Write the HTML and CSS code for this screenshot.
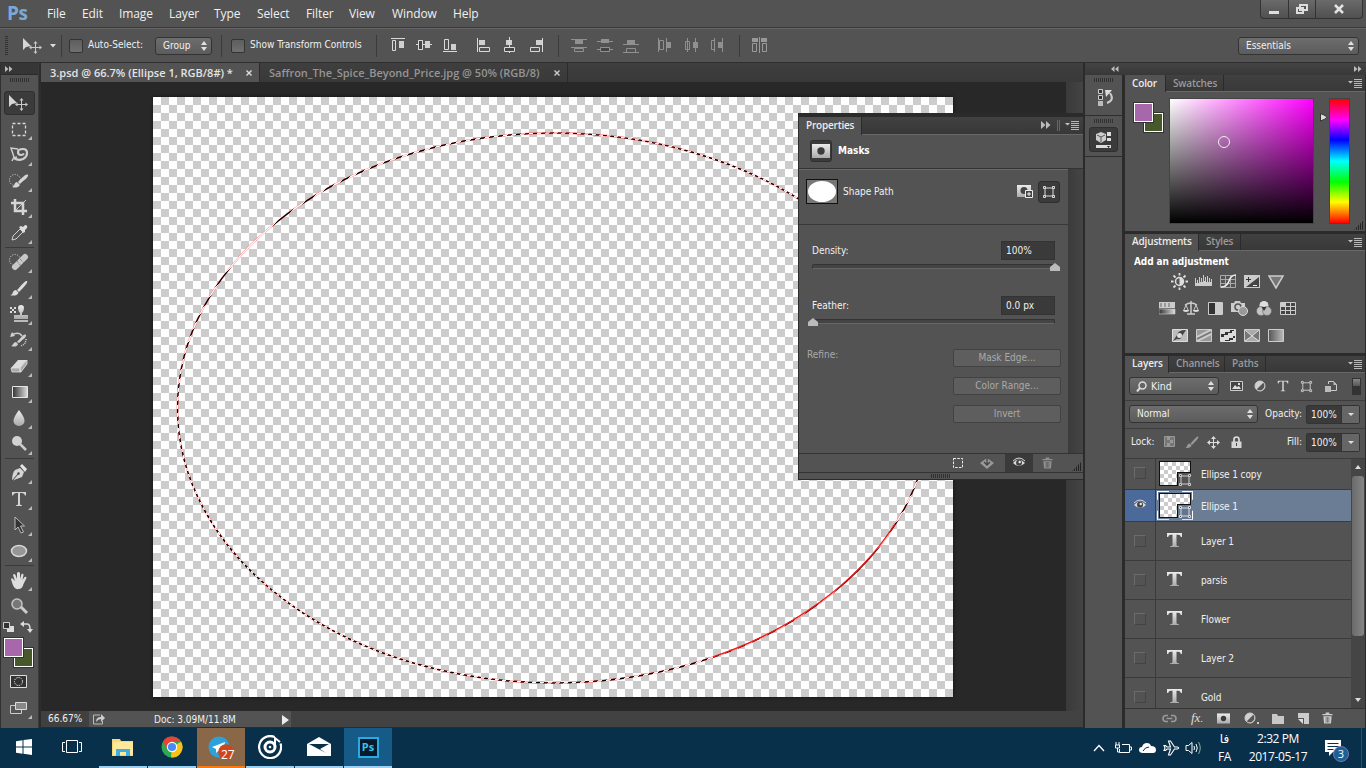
FILE: index.html
```html
<!DOCTYPE html>
<html lang="en">
<head>
<meta charset="utf-8">
<title>3.psd</title>
<link rel="stylesheet" href="styles.css">
</head>
<body>
<svg class="defs" width="0" height="0">
  <defs>
    <linearGradient id="metal" x1="0" y1="0" x2="0" y2="1"><stop offset="0" stop-color="#ececec"/><stop offset="1" stop-color="#aaa"/></linearGradient>
    <linearGradient id="fade"><stop offset="0" stop-color="#333"/><stop offset="1" stop-color="#ddd"/></linearGradient>
    <linearGradient id="fade2"><stop offset="0" stop-color="#555"/><stop offset="1" stop-color="#bbb"/></linearGradient>
    <symbol id="move" viewBox="0 0 22 18"><path d="M1 1v12l3-3 5-1z" fill="#d6d6d6"/><path d="M13.500 6v9M9 10.500h9" stroke="#c9c9c9"/><path d="M13.500 4l2 2.500h-4zM13.500 17l2-2.500h-4zM7 10.500l2.500-2v4zM20 10.500l-2.500-2v4z" fill="#c9c9c9"/></symbol>
    <symbol id="typ" viewBox="0 0 16 16"><path d="M0 1h15v4h-1.200Q13.500 2.800 11 2.800H9.500V13q0 1.300 2.500 1.300V15H3v-.7q2.500 0 2.500-1.300V2.800H4Q1.500 2.800 1.200 5H0z" fill="url(#metal)"/></symbol>
    <symbol id="typthin" viewBox="0 0 16 16"><path d="M1 1h14v3.500h-1Q13.500 2 11 2H9v11q0 1.300 2 1.300V15H5v-.7q2 0 2-1.300V2H5Q2.500 2 2 4.500H1z" fill="#d4d4d4"/></symbol>
    <symbol id="shape" viewBox="0 0 14 14"><path d="M3 3h8v8H3z" fill="none" stroke="currentColor"/><path d="M1.500 1.500h2v2h-2zM10.500 1.500h2v2h-2zM1.500 10.500h2v2h-2zM10.500 10.500h2v2h-2z" fill="#444" stroke="currentColor"/></symbol>
    <symbol id="eye" viewBox="0 0 14 12"><path d="M1 6Q7-1 13 6 7 12 1 6z" fill="#d8d8d8"/><circle cx="7" cy="5.700" r="3" fill="#444"/><circle cx="7.700" cy="5" r="1.200" fill="#eee"/><path d="M1 4Q7-2 13 4" fill="none" stroke="#d8d8d8"/></symbol>
    <symbol id="trash" viewBox="0 0 12 12"><path d="M4 0h4v1.500h3.500V3H.500V1.500H4zM1.500 4h9l-.7 8H2.200z" fill="currentColor"/><path d="M4.500 5v6M6 5v6M7.500 5v6" stroke="#505050" stroke-width=".7"/></symbol>
    <symbol id="menu" viewBox="0 0 14 9"><path d="M0 2h5L2.500 4.500z" fill="#c4c4c4"/><path d="M6 .5h8M6 2.500h8M6 4.500h8M6 6.500h8M6 8.500h8" stroke="#b8b8b8"/></symbol>
    <symbol id="updown" viewBox="0 0 6 10"><path d="M0 4l3-4 3 4zM0 6l3 4 3-4z" fill="#e0e0e0"/></symbol>
    <symbol id="mask" viewBox="0 0 18 14"><path d="M0 0h18v14H0z" fill="url(#metal)"/><circle cx="9" cy="7" r="3.700" fill="#3b3b3b"/></symbol>
    <symbol id="brush" viewBox="0 0 20 18"><path d="M18 2c2 1-5 8-8 11l-2-2c3-3 8-10 10-9zM7 11l2.500 2.500C8.500 17 4 17 1 16c2 0 2.500-1 3-3q1-2 3-2z" fill="currentColor"/></symbol>
    <symbol id="adj" viewBox="0 0 12 12"><circle cx="6" cy="6" r="5" fill="#d0d0d0"/><path d="M9.500 2.500a5 5 0 0 1-7 7z" fill="#555"/><circle cx="6" cy="6" r="5" fill="none" stroke="#ccc"/></symbol>
  </defs>
</svg>

<header class="menubar">
  <span class="logo">Ps</span>
  <nav class="menus"><span>File</span><span>Edit</span><span>Image</span><span>Layer</span><span>Type</span><span>Select</span><span>Filter</span><span>View</span><span>Window</span><span>Help</span></nav>
  <div class="winbtns">
    <svg width="101" height="18"><path d="M27.500 0v18M54.500 0v18" stroke="#333"/><path d="M8 11h10v3H8z" fill="#ddd"/><path d="M39 5h7v5h-7zM36 8h6v5h-6z" fill="#555" stroke="#ddd" stroke-width="2"/><path d="M74 5l8 8M82 5l-8 8" stroke="#e2e2e2" stroke-width="2.500"/></svg>
  </div>
</header>

<section class="options">
  <i class="grip-v"></i>
  <svg class="opt-move" width="22" height="18"><use href="#move"/></svg>
  <svg class="opt-arrow" width="6" height="4"><path d="M0 0h6L3 3.500z" fill="#ddd"/></svg>
  <i class="sep"></i>
  <i class="check c1"></i><span class="t auto">Auto-Select:</span>
  <div class="select group"><span>Group</span><svg width="6" height="10"><use href="#updown"/></svg></div>
  <i class="sep s2"></i>
  <i class="check c2"></i><span class="t show">Show Transform Controls</span>
  <i class="sep s3"></i>
  <svg class="align" width="166" height="18" fill="none" stroke="#d9d9d9">
    <path d="M1 2.500h14M2.500 4.500h3v10h-3zM26 8.500h16M28.500 4.500h4v9h-4zM53 15.500h14M54.500 3.500h4v10h-4z"/><path d="M9 5h5v7H9zM35 5h5v7h-5zM61 8h5v6h-5zM89 4h6v5h-6zM116 4h6v5h-6zM146 4h7v5h-7z" fill="#cfcfcf" stroke="none"/><path d="M28.500 4.500h4v9h-4z" fill="#444"/><path d="M87.500 2v14M89.500 11.500h10v4h-10zM119.500 1v16M152.500 2v14M140.500 11.500h9v4h-9z"/><path d="M114.500 11.500h10v4h-10z" fill="#444"/></svg>
  <i class="sep s4"></i>
  <svg class="distribute" width="154" height="18" fill="none" stroke="#909090">
    <path d="M0 3.500h16M0 11.500h16M3.500 12.500h9v3h-9zM26 5.500h16M26 13.500h16M52 8.500h16M52 16.500h16M55.500 12.500h9v4h-9z"/><path d="M29.500 11.500h9v4h-9z" fill="#444"/><path d="M4 4h8v4H4zM30 3h8v4h-8zM56 4h8v4h-8z" fill="#909090" stroke="none"/><path d="M87.500 2v14M95.500 2v14M88.500 4.500h4v9h-4zM116.500 2v14M124.500 2v14M114.500 5.500h4v8h-4zM143.500 2v14M151.500 2v14M140.500 4.500h3v9h-3z"/><path d="M96 6h4v6h-4zM122 6h5v6h-5zM147 6h4v6h-4z" fill="#909090" stroke="none"/></svg>
  <i class="sep s5"></i>
  <svg class="autoalign" width="16" height="18"><path d="M0 2h6v4H0zM9 2h6v4H9z" fill="#999"/><path d="M.5 7.500h4v8h-4zM10.500 7.500h4v8h-4zM7.500 1v16" fill="none" stroke="#999"/></svg>
  <div class="select essentials"><span>Essentials</span><svg width="6" height="10"><use href="#updown"/></svg></div>
</section>

<main class="work">
  <aside class="tools">
    <div class="toolhead"><svg width="8" height="6"><path d="M0 0l3.500 3L0 6zM4 0l3.500 3L4 6z" fill="#bbb"/></svg></div>
    <i class="grip-h"></i>
    <div class="tool on"><svg width="22" height="18"><use href="#move"/></svg></div>
    <div class="tool sub"><svg width="22" height="20"><path d="M4.500 4.500h13v12h-13z" fill="none" stroke="#d8d8d8" stroke-width="1.300" stroke-dasharray="3 2"/></svg></div>
    <div class="tool sub"><svg width="22" height="20" fill="none" stroke="#d0d0d0"><path d="M10 4L3 3l3 9M6 12l-2 4M5 13l4-1" stroke-width="1.400"/><path d="M6 13q4 3 9 1 4-2 4-6 0-4-4-4-5 0-5 3 0 3 3 3 2 0 3-1.500" stroke-width="2.200"/></svg></div>
    <div class="tool sub"><svg width="22" height="20"><circle cx="7" cy="9" r="5.500" fill="none" stroke="#ddd" stroke-dasharray="1 1.500"/><path d="M20 4c1 2-5 6-8 9l-2-2c3-3 8-9 10-7zM9 11l3 3c-2 3-5 3-8 2 3-1 2-5 5-5z" fill="#d5d5d5"/></svg></div>
    <div class="tool sub"><svg width="22" height="20"><path d="M7 2v12h12M3 6h12v12" fill="none" stroke="#d5d5d5" stroke-width="2.500"/><path d="M7 14L18 3" stroke="#ccc"/></svg></div>
    <div class="tool sub"><svg width="22" height="20"><path d="M4 17l1-4 7-7 3 3-7 7z" fill="#555" stroke="#d0d0d0"/><path d="M11 4l2-1 2 1 2-2q3 0 2 3l-2 2v2l-2 1z" fill="#ddd"/></svg></div>
    <i class="toolsep"></i>
    <div class="tool sub"><svg width="22" height="20"><circle cx="7" cy="8" r="5.500" fill="none" stroke="#ddd" stroke-dasharray="1 1.500"/><path d="M7 15L17 5" stroke="#c8c8c8" stroke-width="6" stroke-linecap="round"/><path d="M9 9l4 5M12 7l4 4" stroke="#666" stroke-dasharray="1 1"/></svg></div>
    <div class="tool sub"><svg width="20" height="18" color="#ddd"><use href="#brush"/></svg></div>
    <div class="tool sub"><svg width="22" height="20"><path d="M10 4a3 3 0 0 1 6 0q0 3-2 5v2h6v4H6v-4h6V9q-2-2-2-5z" fill="url(#metal)"/><path d="M6 17h14" stroke="#ddd" stroke-width="1.500"/><path d="M2 3h2v2H2zM6 3h2v2H6zM4 5h2v2H4zM2 7h2v2H2zM6 7h2v2H6z" fill="#ddd"/></svg></div>
    <div class="tool sub"><svg width="22" height="20"><path d="M3 5q8-4 11 1" fill="none" stroke="#ccc" stroke-width="1.500"/><path d="M2 7l5-1-3-4zM18 5c1 2-5 6-7 8l-2-1c3-3 7-9 9-7zM8 12l2 2c-1 3-4 3-7 2 2 0 2-4 5-4z" fill="#d0d0d0"/><path d="M18 9q0 6-6 7" fill="none" stroke="#ccc" stroke-width="1.500" stroke-dasharray="1 1"/></svg></div>
    <div class="tool sub"><svg width="22" height="20"><path d="M3 12l7-8h9l-7 8z" fill="#ddd"/><path d="M3 12h9v4H4zM12 12l7-8v4l-6 8h-1z" fill="#aaa" stroke="#e0e0e0" stroke-width=".8"/></svg></div>
    <div class="tool sub"><svg width="22" height="20"><path d="M4.500 4.500h15v11h-15z" fill="url(#fade)" stroke="#e5e5e5"/></svg></div>
    <div class="tool sub"><svg width="22" height="20"><path d="M11 2q6 8 5.500 11a5.500 5 0 0 1-11 0Q5.500 9 11 2z" fill="url(#metal)"/></svg></div>
    <div class="tool sub"><svg width="22" height="20"><circle cx="9" cy="7" r="5" fill="#d2d2d2"/><path d="M12 10l6 6" stroke="#ccc" stroke-width="2.500"/></svg></div>
    <i class="toolsep"></i>
    <div class="tool sub"><svg width="22" height="20"><path d="M4 18Q4 10 7 7l5-2 4 4-2 5-8 3z" fill="#d5d5d5"/><path d="M12 3l2-2 5 5-2 3z" fill="#e5e5e5"/><path d="M4 18l6-7" stroke="#444"/><circle cx="10.500" cy="10.500" r="1.200" fill="#444"/></svg></div>
    <div class="tool sub"><svg width="16" height="16"><use href="#typthin"/></svg></div>
    <div class="tool sub"><svg width="22" height="20"><path d="M7 2v13l3-3 3 6 2.500-1-3-6h4z" fill="#333" stroke="#bbb"/></svg></div>
    <div class="tool sub"><svg width="22" height="20"><ellipse cx="11" cy="10" rx="7.500" ry="5.500" fill="#969696" stroke="#d8d8d8" stroke-width="1.500"/></svg></div>
    <i class="toolsep"></i>
    <div class="tool sub"><svg width="22" height="20"><path d="M3 9q1-2 3 1l1 1-2-6q1-2 2.500 0L9 9V3q1.500-2 3 0v6l1.500-5q2-1 2 1l-1 5 2-3q2-1 2 1l-3 6q-1 5-5 5-4 1-6-5z" fill="#ddd"/></svg></div>
    <div class="tool"><svg width="22" height="20"><circle cx="9" cy="8" r="5" fill="#777" stroke="#c5c5c5" stroke-width="1.500"/><path d="M13 11l6 6" stroke="#ccc" stroke-width="3"/></svg></div>
    <svg class="minis" width="34" height="12"><path d="M6 5h7v6H6z" fill="#ddd"/><path d="M2.500 1.500h6v6h-6z" fill="#333" stroke="#ccc"/><path d="M21 3h5q3 0 3 5" fill="none" stroke="#ddd" stroke-width="1.500"/><path d="M19 3l4-3v6zM26 8h6l-3 4z" fill="#ddd"/></svg>
    <div class="swatches"><i class="bg"></i><i class="fg"></i></div>
    <div class="tool qm"><svg width="18" height="14"><path d="M.5.500h16v12H.500z" fill="#333" stroke="#ddd"/><circle cx="8.500" cy="6.500" r="4" fill="none" stroke="#eee" stroke-dasharray="1.300 1"/></svg></div>
    <div class="tool sub"><svg width="20" height="18"><path d="M1.500 6.500h11v8h-11z" fill="#555" stroke="#ccc"/><path d="M6.500 3.500h11v7h-11z" fill="#888" stroke="#ddd"/></svg></div>
  </aside>

  <section class="document">
    <div class="tabs">
      <div class="tab active"><span class="name1">3.psd @ 66.7% (Ellipse 1, RGB/8#) *</span><svg width="6" height="6"><path d="M.5.5l5 5M5.500.5l-5 5" stroke="#ddd" stroke-width="1.400"/></svg></div>
      <div class="tab"><span class="name2">Saffron_The_Spice_Beyond_Price.jpg @ 50% (RGB/8)</span><svg width="6" height="6"><path d="M.5.5l5 5M5.500.5l-5 5" stroke="#ccc" stroke-width="1.400"/></svg></div>
    </div>
    <div class="stage">
      <div class="artboard">
        <svg width="800" height="600">
          <defs><linearGradient id="ants" gradientUnits="userSpaceOnUse" x1="0" y1="0" x2="4" y2="4" spreadMethod="repeat"><stop offset="0" stop-color="#000"/><stop offset=".5" stop-color="#000"/><stop offset=".5" stop-color="#fff"/><stop offset="1" stop-color="#fff"/></linearGradient></defs>
          <ellipse cx="401" cy="311" rx="376.500" ry="275" fill="none" stroke="#f22" stroke-opacity=".65" stroke-width="1.800"/>
          <ellipse cx="401" cy="311" rx="376.500" ry="275" fill="none" stroke="url(#ants)" stroke-width="1.200"/>
          <path d="M742 427A376.500 275 0 0 1 560 560" fill="none" stroke="#f11818" stroke-width="1.300"/>
        </svg>
      </div>
      <i class="vscroll"></i>
    </div>
    <div class="status"><span class="zoom">66.67%</span><div class="doc"><svg width="14" height="12"><path d="M8 2H1.500v9h9V8" fill="none" stroke="#bbb"/><path d="M4 9q0-5 5-5V1l4 4-4 4V6Q6 6 4 9z" fill="#ccc"/></svg><span>Doc: 3.09M/11.8M</span><svg class="play" width="7" height="10"><path d="M0 0l7 5-7 5z" fill="#eee"/></svg></div></div>
  </section>

  <section class="dock">
    <div class="dockhead"><svg width="8" height="6"><path d="M3.500 0L0 3l3.500 3zM7.500 0L4 3l3.500 3z" fill="#bbb"/></svg><svg width="8" height="6"><path d="M0 0l3.500 3L0 6zM4 0l3.500 3L4 6z" fill="#bbb"/></svg></div>
    <div class="dockbody">
      <div class="icons">
        <div class="iconcell"><i class="grip-h"></i><svg width="24" height="22"><path d="M6.500 2.500h4v4h-4zM6.500 8.500h4v4h-4z" fill="#333" stroke="#ccc"/><path d="M6 14h5v5H6z" fill="#bbb"/><path d="M15 16q8-3 3-10" fill="none" stroke="#ccc" stroke-width="2"/><path d="M13 3h7l-6 7z" fill="#ddd"/></svg></div>
        <div class="iconcell"><i class="grip-h"></i><div class="pressed"><svg width="18" height="18"><path d="M6 1l5 2v6l-5 3-5-3V3z" fill="#ccc"/><path d="M2 4l4 2v5M6 6l4-2" fill="none" stroke="#555"/><path d="M12 1h4v4h-4zM12 7h4v3h-4zM1 14h15v3H1z" fill="#ddd"/><path d="M12 15h3l-1.500 2z" fill="#222"/></svg></div></div>
      </div>
      <div class="panels">
        <section class="panel color">
          <div class="ptabs"><b class="sel w38">Color</b><b class="w58">Swatches</b><svg width="14" height="9"><use href="#menu"/></svg></div>
          <div class="colorbody">
            <div class="swatches"><i class="bg"></i><i class="fg"></i></div>
            <div class="field"><i class="ring"></i></div>
            <svg class="hueptr" width="7" height="9"><path d="M.5.500Q7 3 6.500 4.500 6 6 .5 8z" fill="#ddd" stroke="#333"/></svg>
            <div class="hue"></div>
          </div>
          <i class="resize"></i>
        </section>
        <section class="panel adjust">
          <div class="ptabs"><b class="sel w73">Adjustments</b><b class="w42">Styles</b><svg width="14" height="9"><use href="#menu"/></svg></div>
          <div class="adjtitle">Add an adjustment</div>
          <div class="adjrow r1">
            <svg width="17" height="17"><circle cx="8.500" cy="8.500" r="4" fill="#555" stroke="#ddd" stroke-width="1.500"/><path d="M8.500 4.500a4 4 0 0 1 0 8z" fill="#ddd"/><path d="M8.500 0v2.500M8.500 14.500V17M0 8.500h2.500M14.500 8.500H17M2.500 2.500l2 2M12.500 12.500l2 2M2.500 14.500l2-2M12.500 4.500l2-2" stroke="#ddd" stroke-width="1.800"/></svg>
            <svg width="18" height="17"><path d="M0 13V5h1v5h1V7h1v3h1V4h1v5h1V5h1v4h1V2h1v6h1V4h1v5h1V3h1v6h1V5h1v4h1V6h1v7z" fill="#ccc"/></svg>
            <svg width="17" height="17"><path d="M.5 2.500h15v12H.5zM5.500 2v12M10.500 2v12M0 6.500h16M0 10.500h16" fill="none" stroke="#aaa"/><path d="M1 14q6 0 8-6t7-6" fill="none" stroke="#eee" stroke-width="1.500"/></svg>
            <svg width="17" height="17"><path d="M0 2h16v13H0z" fill="#ccc"/><path d="M2 14L15 4v10z" fill="#444"/><path d="M2 6.500h5M4.500 4v5" stroke="#333"/><path d="M9 12.500h4" stroke="#eee"/></svg>
            <svg width="17" height="17"><path d="M1 3h14L8 15z" fill="#777" stroke="#ccc" stroke-width="1.500"/></svg>
          </div>
          <div class="adjrow r2">
            <svg width="17" height="17"><path d="M0 2h16v6H0z" fill="#ccc"/><path d="M2 3v4M6 3v4M10 3v4" stroke="#888" stroke-width="1.500"/><path d="M0 9h16v5H0z" fill="url(#fade)" stroke="#ccc" stroke-width=".6"/></svg>
            <svg width="17" height="17"><path d="M8 1v13M4 14h8M2 5q6-4 12 0" fill="none" stroke="#ccc" stroke-width="1.500"/><path d="M3 5l-2.500 6h5zM13 5l-2.500 6h5z" fill="none" stroke="#ccc"/><path d="M0 10h6q-3 4-6 0zM10 10h6q-3 4-6 0z" fill="#ddd"/></svg>
            <svg width="17" height="17"><path d="M1.500 2.500h14v12h-14z" fill="#333" stroke="#ccc"/><path d="M8 3h7v11H8z" fill="#ccc"/></svg>
            <svg width="18" height="17"><path d="M0 3h3l1-2h5l1 2h4v9H0z" fill="#ccc"/><circle cx="7" cy="7" r="3" fill="none" stroke="#555" stroke-width="1.500"/><circle cx="12" cy="11" r="4.500" fill="#999" stroke="#ddd"/></svg>
            <svg width="17" height="17"><circle cx="8" cy="5.500" r="4.500" fill="#ddd"/><circle cx="5" cy="11" r="4.500" fill="#c5c5c5" stroke="#666" stroke-width=".6"/><circle cx="11" cy="11" r="4.500" fill="#bbb" stroke="#666" stroke-width=".6"/><path d="M5.500 7h5L8 11z" fill="#333"/></svg>
            <svg width="17" height="17"><path d="M.5 2.500h15v12H.5z" fill="#444" stroke="#ccc"/><path d="M1 3h4v4H1z" fill="#ccc"/><path d="M5.500 2v12M10.500 2v12M0 6.500h16M0 10.500h16" stroke="#ccc"/></svg>
          </div>
          <div class="adjrow r3">
            <svg width="17" height="17"><path d="M.5 2.500h15v12H.5z" fill="#bbb" stroke="#ddd"/><path d="M1 14l4-6q1-5 9-5L10 9q-1 4-5 3z" fill="#444"/><circle cx="7.500" cy="8.500" r="2.500" fill="#ddd"/></svg>
            <svg width="17" height="17"><path d="M.5 2.500h15v12H.5z" fill="#999" stroke="#ccc"/><path d="M1 10L15 3M1 14L15 7" stroke="#ccc" stroke-width="2"/><path d="M1 12L15 5" stroke="#777" stroke-width="1.500"/></svg>
            <svg width="17" height="17"><path d="M.5 2.500h15v12H.5z" fill="#ddd" stroke="#ddd"/><path d="M1 7h4V5h5V3h4v1h-2v2H8v2H4v2H1zM15 7v2h-2v2H9v2H5v1h5v-1h3v-2h2z" fill="#333"/></svg>
            <svg width="17" height="17"><path d="M.5 2.500h15v12H.5z" fill="#777" stroke="#ccc"/><path d="M1 3l7 6 7-6M1 14l7-5 7 5" fill="#aaa" stroke="#ddd"/></svg>
            <svg width="17" height="17"><path d="M.5 2.500h15v12H.5z" fill="url(#fade2)" stroke="#ccc"/></svg>
          </div>
        </section>
        <section class="panel layers">
          <div class="ptabs"><b class="sel w43">Layers</b><b class="w56">Channels</b><b class="w41">Paths</b><svg width="14" height="9"><use href="#menu"/></svg></div>
          <div class="lrow filter">
            <div class="select kind"><svg class="mag" width="11" height="11"><circle cx="6.500" cy="4.500" r="3.500" fill="none" stroke="#ddd" stroke-width="1.500"/><path d="M4 7l-3 3.500" stroke="#ddd" stroke-width="2"/></svg><span>Kind</span><svg width="6" height="10"><use href="#updown"/></svg></div>
            <svg width="13" height="12"><path d="M.5 1.500h12v9H.5z" fill="#444" stroke="#ccc"/><path d="M2 9l3-4 2 2 2-1 2 3z" fill="#ddd"/><path d="M8 3h2v2H8z" fill="#ddd"/></svg>
            <svg width="12" height="12"><use href="#adj"/></svg>
            <svg width="12" height="12"><use href="#typthin"/></svg>
            <svg width="13" height="13" color="#ccc"><use href="#shape"/></svg>
            <svg width="13" height="13"><path d="M4.500 4V1.500h5l3 3v6H7" fill="none" stroke="#ccc"/><path d="M9.500 1v4H13M1 6h6v6H1z" fill="#bbb"/></svg>
            <i class="switch"></i>
          </div>
          <div class="lrow blend"><div class="select normal"><span>Normal</span><svg width="6" height="10"><use href="#updown"/></svg></div><span class="rlabel">Opacity:</span><div class="num"><span>100%</span><i></i></div></div>
          <div class="lrow lock"><span>Lock:</span>
            <svg width="12" height="12"><path d="M.5.500h10v10H.500z" fill="#777" stroke="#999"/><path d="M3 1h3v3H3zM6 4h3v3H6zM3 7h3v3H3z" fill="#999"/></svg>
            <svg width="16" height="14" color="#999"><use href="#brush"/></svg>
            <svg width="13" height="13"><path d="M6.500 2v9M2 6.500h9" stroke="#ddd"/><path d="M6.500 0L9 3H4zM6.500 13L9 10H4zM0 6.500L3 4v5zM13 6.500L10 4v5z" fill="#ddd"/></svg>
            <svg width="11" height="13"><path d="M3 6V3.500q0-2.500 2.500-2.500T8 3.500V6" fill="none" stroke="#ddd" stroke-width="1.700"/><path d="M.5 5.500h10V12H.500z" fill="#d5d5d5"/><path d="M5 7h1v3H5z" fill="#444"/></svg>
            <span class="rlabel">Fill:</span><div class="num"><span>100%</span><i></i></div></div>
          <div class="list">
            <div class="rows">
              <div class="layer short"><div class="vis"><i class="box"></i></div><div class="thumb"><div class="chk"></div><svg width="14" height="14" color="#ccc"><use href="#shape"/></svg></div><span>Ellipse 1 copy</span></div>
              <div class="layer short selected"><div class="vis"><svg width="14" height="12"><use href="#eye"/></svg></div><div class="thumb framed"><div class="chk"></div><svg width="14" height="14" color="#d8dde8"><use href="#shape"/></svg></div><span>Ellipse 1</span></div>
              <div class="layer"><div class="vis"><i class="box"></i></div><svg class="tt" width="16" height="16"><use href="#typ"/></svg><span>Layer 1</span></div>
              <div class="layer"><div class="vis"><i class="box"></i></div><svg class="tt" width="16" height="16"><use href="#typ"/></svg><span>parsis</span></div>
              <div class="layer"><div class="vis"><i class="box"></i></div><svg class="tt" width="16" height="16"><use href="#typ"/></svg><span>Flower</span></div>
              <div class="layer"><div class="vis"><i class="box"></i></div><svg class="tt" width="16" height="16"><use href="#typ"/></svg><span>Layer 2</span></div>
              <div class="layer"><div class="vis"><i class="box"></i></div><svg class="tt" width="16" height="16"><use href="#typ"/></svg><span>Gold</span></div>
            </div>
            <div class="scroll"><svg width="6" height="4"><path d="M0 4h6L3 0z" fill="#ddd"/></svg><i></i><svg width="6" height="4"><path d="M0 0h6L3 4z" fill="#ddd"/></svg></div>
          </div>
          <div class="lfoot">
            <svg width="15" height="9"><path d="M6 1.500H4a3 3 0 0 0 0 6h2M9 1.500h2a3 3 0 0 1 0 6H9M4.500 4.500h6" fill="none" stroke="#999" stroke-width="1.600"/></svg>
            <span class="fx">fx<small>.</small></span>
            <svg width="13" height="11"><use href="#mask"/></svg>
            <svg width="15" height="12"><use href="#adj" width="12"/><path d="M13 10h2v2h-2z" fill="#ccc"/></svg>
            <svg width="13" height="11"><path d="M0 1h5l1 2h6v8H0z" fill="#c8c8c8"/></svg>
            <svg width="11" height="11"><path d="M0 0h11v11H6V5H0z" fill="#ccc"/><path d="M0 6h5v5z" fill="#ddd"/></svg>
            <svg width="11" height="12" color="#ccc"><use href="#trash"/></svg>
          </div>
        </section>
      </div>
    </div>
  </section>

  <section class="props">
    <div class="ptabs"><b class="sel">Properties</b><svg class="pa" width="10" height="8"><path d="M0 0l4.500 4L0 8zM5 0l4.500 4L5 8z" fill="#bbb"/></svg><i></i><svg width="14" height="9"><use href="#menu"/></svg></div>
    <div class="masks"><div class="pressed"><svg width="18" height="14"><use href="#mask"/></svg></div><b>Masks</b></div>
    <div class="pbody">
      <div class="pmain">
        <div class="shapepath"><div class="pthumb"><i></i></div><span>Shape Path</span>
          <svg class="addmask" width="18" height="15"><path d="M1 1h14v12H1z" fill="url(#metal)"/><circle cx="8" cy="6.500" r="3.500" fill="#444"/><path d="M9.500 6.500h7v7h-7z" fill="#444" stroke="#eee"/><path d="M11 10h4M13 8v4" stroke="#eee"/></svg>
          <div class="pressed"><svg width="14" height="14" color="#ddd"><use href="#shape"/></svg></div></div>
        <div class="prow dens"><span>Density:</span><div class="inp">100%</div></div>
        <div class="slider end"><i></i></div>
        <div class="prow feath"><span>Feather:</span><div class="inp">0.0 px</div></div>
        <div class="slider"><i></i></div>
        <div class="refine"><span>Refine:</span><div class="btns"><div>Mask Edge...</div><div>Color Range...</div><div>Invert</div></div></div>
      </div>
      <div class="pscroll"></div>
    </div>
    <div class="pfoot">
      <svg width="12" height="12"><path d="M1.500 1.500h9v9h-9z" fill="none" stroke="#eee" stroke-dasharray="2.500 1.300"/></svg>
      <svg width="16" height="12"><path d="M8 1l7 5-7 6-7-6z" fill="#999"/><path d="M8 0v7M5 5l3 3 3-3" fill="none" stroke="#444" stroke-width="1.300"/></svg>
      <div class="eyebtn"><svg width="14" height="12"><use href="#eye"/></svg></div>
      <svg width="11" height="12" color="#909090"><use href="#trash"/></svg>
      <i class="resize"></i>
    </div>
    <div class="pgrip"><i class="grip-h"></i></div>
  </section>
</main>

<footer class="taskbar">
  <div class="task"><svg width="16" height="16"><path d="M0 2.300L6.500 1.300V7.500H0zM7.500 1.100L16 0v7.500H7.500zM0 8.500h6.500v6.200L0 13.700zM7.500 8.500H16V16l-8.500-1.200z" fill="#fff"/></svg></div>
  <div class="task tv"><svg width="20" height="16"><path d="M4.500 1.500h11v12h-11zM3 3.500H.500v9H3M17 3.500h2.500v9H17" fill="none" stroke="#fff"/></svg></div>
  <div class="task run"><svg width="22" height="19"><path d="M0 1h8l1 2h12v15H0z" fill="#f8d775"/><path d="M1 4h20v13H1z" fill="#ffe79b"/><path d="M4 18v-7h14v7h-4v-4H8v4z" fill="#3eafe5"/></svg></div>
  <div class="task run chrome"><svg width="22" height="22"><circle cx="11" cy="11" r="10.500" fill="#2da94f"/><path d="M11 11l9.100-5.200A10.500 10.500 0 0 1 10 21.500z" fill="#fbc116"/><path d="M1.900 5.700A10.500 10.500 0 0 1 20.100 6H11L6.500 13.500z" fill="#e94335"/><circle cx="11" cy="11" r="5.200" fill="#fff"/><circle cx="11" cy="11" r="4.100" fill="#4a8af4"/></svg></div>
  <div class="task run tele"><svg width="26" height="25"><circle cx="11" cy="12" r="10.500" fill="#2ca2dd"/><path d="M4 12l13-5-3 12-4-3-2 2v-4z" fill="#fff"/><circle cx="18" cy="17" r="7.800" fill="#cc471d"/></svg><em>27</em></div>
  <div class="task run"><svg width="24" height="24"><path d="M16.500 2A11 11 0 1 0 22.500 8.500" fill="none" stroke="#fff" stroke-width="2.200"/><circle cx="12" cy="12" r="5" fill="none" stroke="#fff" stroke-width="3"/><path d="M17 12V3l5 4" fill="none" stroke="#fff" stroke-width="2"/><circle cx="12" cy="12" r="1.300" fill="#fff"/></svg></div>
  <div class="task run"><svg width="24" height="20"><path d="M0 7l12-7 12 7v12H0z" fill="#fff"/><path d="M2 7h20l-9 5 6 4z" fill="#09304a"/></svg></div>
  <div class="task run psapp"><div class="psico">Ps</div></div>
  <div class="tray">
    <svg width="12" height="8"><path d="M1 7l5-5.500L11 7" fill="none" stroke="#fff" stroke-width="1.300"/></svg>
    <svg class="bat" width="17" height="12"><path d="M4.500 7v3.500h10v-8H7M15 5h1.500v3H15M1 0v3M4 0v3M.500 3h4v3h-4zM2.500 6v4h2" fill="none" stroke="#fff"/></svg>
    <svg class="cloud" width="17" height="11"><path d="M4 10Q0 10 0 7t3-3q1-4 5-4 3 0 4 3 5 0 5 4 0 3-3 3z" fill="#fff"/><path d="M4 8q2-4 6-4" fill="none" stroke="#09304a"/></svg>
    <svg class="plane" width="17" height="16"><path d="M1 5.500h1.500l1.500 1.500h3.500L5.500 1h2l4 6h3q2.500 1 0 2h-3l-4 6h-2L7.500 9H4l-1.500 1.500H1L2 8z" fill="none" stroke="#fff" stroke-width="1.100"/></svg>
    <svg class="vol" width="17" height="14"><path d="M1 4.500h2.500L7 1.500v11l-3.500-3H1z" fill="none" stroke="#fff"/><path d="M9 5q1 2 0 4M11 3q2.500 4 0 8" fill="none" stroke="#fff"/><path d="M13.500 1q3.500 6 0 12" fill="none" stroke="#8aa"/></svg>
    <div class="lang"><span lang="fa">فا</span><span>FA</span></div>
    <div class="clock"><span>2:32 PM</span><span>2017-05-17</span></div>
    <div class="notes"><svg width="16" height="16"><path d="M0 0h16v12H8l-4 4v-4H0z" fill="#fff"/><path d="M2.500 3.500h11M2.500 6.500h11M2.500 9.500h6" stroke="#09304a"/></svg><em>3</em></div>
    <i class="peek"></i>
  </div>
</footer>
</body>
</html>
```
FILE: styles.css
```css
*{box-sizing:border-box}
body{margin:0;width:1366px;height:768px;overflow:hidden;background:#535353;color:#f0f0f0;font:10px/14px "DejaVu Sans Condensed","DejaVu Sans",sans-serif;font-stretch:condensed;letter-spacing:0;white-space:nowrap;display:flex;flex-direction:column}
svg{display:block;flex:none}
i,em{display:block;font-style:normal;flex:none}
.defs{position:absolute}
.menubar{height:28px;display:flex;border-bottom:1px solid #3a3a3a;flex:none}
.logo{width:47px;padding-left:7px;font:bold 19px/26px "Open Sans",sans-serif;color:#7ba8d6;letter-spacing:-.5px}
.menus{display:grid;grid-template-columns:35px 37px 50px 45px 43px 49px 43px 43px 61px 40px;font:12px/28px "Open Sans",sans-serif;letter-spacing:-.1px}
.winbtns{margin-left:auto;margin-right:3px;width:103px;height:19px;border:1px solid #333;border-top:0;border-radius:0 0 4px 4px;background:linear-gradient(#6a6a6a,#505050)}
.options{height:35px;border-top:1px solid #666;border-bottom:1px solid #2e2e2e;display:flex;align-items:center;flex:none}
.grip-v{width:3px;height:20px;margin-left:5px;background:repeating-linear-gradient(#333 0 1px,#535353 1px 2px)}
.opt-move{margin-left:14px}
.opt-arrow{margin-left:6px}
.sep{width:1px;height:22px;background:#3b3b3b;margin-left:5px}
.check{width:14px;height:14px;border:1px solid #333;border-radius:2px;background:linear-gradient(#5e5e5e,#707070)}
.c1{margin-left:7px}.auto{margin-left:5px;width:67px}
.t{margin-top:-1px}
.select{height:18px;border:1px solid #333;border-radius:3px;background:linear-gradient(#6d6d6d,#5c5c5c);display:flex;align-items:center;justify-content:space-between;padding:0 4px 0 7px;flex:none}
.group{width:57px}
.s2{margin-left:9px}.c2{margin-left:9px}.show{margin-left:5px;width:126px}.s3{margin-left:0}
.align,.distribute,.autoalign{margin-top:-2px}
.align{margin-left:13px}.s4{margin-left:2px}.distribute{margin-left:12px}.s5{margin-left:14px}.autoalign{margin-left:12px}
.essentials{margin-left:auto;margin-right:7px;width:121px}
.work{height:665px;display:flex;position:relative;flex:none;background:#2d2d2d}
.tools{width:39px;border-left:1px solid #303030;border-right:1px solid #3a3a3a;background:#535353;display:flex;flex-direction:column;align-items:center}
.toolhead{width:100%;height:12px;background:#363636;border-bottom:1px solid #2a2a2a;padding:3px 4px;flex:none}
.grip-h{width:20px;height:4px;background:repeating-linear-gradient(90deg,#303030 0 1px,#555 1px 2px)}
.tools>.grip-h{margin:3px 0 8px}
.tool{width:31px;height:26px;display:flex;align-items:center;justify-content:center;position:relative;flex:none}
.tool>svg{margin-right:2px}
.tool.on{height:24px;margin:1px 0;background:#3b3b3b;border:1px solid #2f2f2f;border-radius:3px}
.sub:after{content:"";position:absolute;right:3px;bottom:2px;border-left:4px solid transparent;border-bottom:4px solid #bbb}
.toolsep{width:29px;height:1px;background:#3a3a3a;margin:1px 0}
.minis{margin:2px 3px 4px 0}
.swatches{width:30px;height:30px;position:relative;flex:none}
.tools .swatches{margin-right:3px}
.fg,.bg{position:absolute;width:19px;height:19px;border:1px solid #fff;outline:1px solid #333}
.fg{left:1px;top:1px;background:#a768ab}
.bg{right:0;bottom:0;background:#47592a}
.qm{margin-top:2px}
.document{width:1043px;margin-left:2px;display:flex;flex-direction:column;border-right:1px solid #2b2b2b}
.tabs{height:19px;background:linear-gradient(#3f3f3f,#393939);display:flex;font:600 11px/19px "Open Sans",sans-serif;letter-spacing:0;color:#959595;flex:none}
.tab{display:flex;align-items:center;border-right:1px solid #2b2b2b;padding:0 7px 0 9px}
.tab.active{background:#535353;color:#e4e4e4;width:219px}
.tab:nth-child(2){width:308px}
.tab svg{margin-left:auto}
.stage{flex:1;background:#282828;padding:15px 0 0 112px;display:flex;justify-content:space-between;min-height:0}
.artboard{width:800px;height:600px;box-shadow:0 0 3px #111;background:repeating-conic-gradient(#ccc 0 25%,#fff 0 50%) 0 0/16px 16px}
.vscroll{width:17px;margin-top:-15px;background:linear-gradient(90deg,#3a3a3a,#444)}
.status{height:17px;display:flex;background:#424242;flex:none;line-height:15px;border-bottom:1px solid #2b2b2b}
.zoom{width:48px;padding-left:7px;background:#404040}
.doc{width:202px;background:#535353;display:flex;padding-top:1px}
.doc svg{margin:1px 0 0 3px}.doc span{margin-left:48px}.doc .play{margin:3px 2px 0 auto}
.dock{width:282px;border-left:1px solid #2b2b2b;background:#2b2b2b;display:flex;flex-direction:column}
.dockhead{height:12px;background:linear-gradient(#444,#383838);display:flex;justify-content:space-between;padding:3px 4px 0 26px;flex:none}
.dockbody{display:flex;flex:1;min-height:0;gap:3px}
.icons{width:37px;background:#535353;display:flex;flex-direction:column}
.iconcell{height:41px;display:flex;flex-direction:column;align-items:center;border-bottom:1px solid #2e2e2e;padding-top:3px}
.iconcell>svg{margin-top:5px}
.pressed{background:#3b3b3b;border:1px solid #2f2f2f;border-radius:3px;display:flex;align-items:center;justify-content:center;flex:none;width:22px;height:22px}
.iconcell .pressed{width:29px;height:25px;margin-top:4px}
.panels{width:240px;display:flex;flex-direction:column;gap:3px}
.panel{background:#535353;position:relative}
.color{height:156px}.adjust{height:119px}.layers{height:373px}
.ptabs{height:17px;background:linear-gradient(#414141,#383838);display:flex;border-bottom:1px solid #686868;font:600 10px/15px "Open Sans",sans-serif;letter-spacing:-.15px;color:#9a9a9a;flex:none;align-items:flex-start}
.color .ptabs{line-height:17px}
.ptabs b{font-weight:600;padding-left:7px;border-right:1px solid #2b2b2b;height:16px}
.ptabs .sel{background:#535353;color:#ececec;height:17px}
.ptabs svg:last-child{margin:4px 3px 0 auto}
.w38{width:41px}.w58{width:58px}.w73{width:74px}.w42{width:42px}.w43{width:44px}.w56{width:56px}.w41{width:41px}
.colorbody{display:flex;padding:7px 0 0 8px}
.colorbody .swatches{margin-top:3px}
.field{width:143px;height:124px;margin-left:7px;background:linear-gradient(transparent,#000),linear-gradient(90deg,#fff,#f0f);position:relative;outline:1px solid #444}
.ring{position:absolute;left:48px;top:37px;width:12px;height:12px;border:1.500px solid #eee;border-radius:50%}
.hueptr{margin:14px 0 0 7px}
.hue{width:19px;height:124px;margin-left:3px;background:linear-gradient(red,#f0f 17%,#00f 33%,#0ff 50%,#0f0 67%,#ff0 83%,red);outline:1px solid #444}
.resize{position:absolute;right:1px;bottom:1px;width:10px;height:10px;background:repeating-linear-gradient(90deg,#222 0 1px,transparent 1px 2px);clip-path:polygon(100% 0,100% 100%,0 100%)}
.adjtitle{font-weight:bold;font-size:10px;color:#fff;padding:4px 0 0 9px;height:22px;letter-spacing:-.1px}
.adjrow{display:flex;height:27px;gap:7px}
.r1{padding-left:46px}.r2{padding-left:34px}.r3{padding-left:47px}
.lrow{display:flex;align-items:center;height:28px;border-bottom:1px solid #3c3c3c;padding:0 5px 0 4px}
.kind{width:90px;padding-left:6px;margin-right:11px}.kind span{margin-right:auto;margin-left:4px;font-size:10.500px}
.filter>svg{margin-right:11px}
.switch{width:9px;height:17px;margin-left:auto;margin-right:-1px;background:linear-gradient(#888,#555 48%,#333 50%);border:1px solid #333}
.normal{width:129px}
.rlabel{margin-left:auto;margin-right:4px}
.num{width:54px;height:19px;display:flex;border:1px solid #333;border-radius:2px;background:#3a3a3a;line-height:17px;padding-left:4px;justify-content:space-between;flex:none}
.num i{width:18px;background:#666;border-left:1px solid #333}
.num i:after{content:"";display:block;margin:7px 6px;border:3px solid transparent;border-top-color:#ddd}
.lock{height:30px;padding:0 5px 2px 6px}
.lock svg{margin-left:9px}
.lock svg:nth-of-type(2){margin-left:8px}
.lock svg:nth-of-type(3){margin-left:7px}
.lock svg:nth-of-type(4){margin-left:11px}
.list{height:250px;display:flex;border-bottom:1px solid #333}
.rows{width:226px;overflow:hidden;margin-top:-1px}
.layer{height:39px;display:flex;align-items:center;border-bottom:1px solid #3b3b3b}
.layer.short{height:32px}
.layer>span{margin-left:auto;width:150px;padding-top:3px;letter-spacing:-.1px}
.vis{width:31px;height:100%;border-right:1px solid #3b3b3b;display:flex;align-items:center;justify-content:center;flex:none}
.box{width:12px;height:12px;border:1px solid #6b6b6b;border-right-color:#444;border-bottom-color:#444}
.tt{margin:-1px 0 0 11px}
.selected{background:#6b7d95}.selected .vis{background:#4c6a99}
.thumb{width:36px;height:29px;margin-left:1px;padding:2px;position:relative}
.chk{width:32px;height:25px;border:1px solid #111;background:repeating-conic-gradient(#ccc 0 25%,#fff 0 50%) 0 0/8px 8px}
.thumb svg{position:absolute;right:1px;bottom:1px;background:#535353;box-shadow:-1px -1px #111}
.selected .thumb svg{background:#64758c}
.framed:before{content:"";position:absolute;inset:0;border:1px solid #fff;clip-path:polygon(0 0,12px 0,12px 2px,25px 2px,25px 0,100% 0,100% 9px,34px 9px,34px 20px,100% 20px,100% 100%,25px 100%,25px 27px,12px 27px,12px 100%,0 100%,0 20px,2px 20px,2px 9px,0 9px)}
.scroll{width:14px;background:#454545;display:flex;flex-direction:column;align-items:center;padding:6px 0}
.scroll i{width:12px;height:160px;margin:7px 0 auto;background:linear-gradient(90deg,#6a6a6a,#858585);border-radius:3px}
.lfoot{height:19px;display:flex;align-items:center;padding-left:37px;gap:14px}
.lfoot svg:nth-of-type(n+4){margin-left:-1px}
.fx{font:italic 13px/14px "Liberation Serif",serif;letter-spacing:0;color:#ddd}
.props{position:absolute;left:798px;top:50px;width:286px;height:367px;background:#535353;border:1px solid #2b2b2b;border-top-width:4px;display:flex;flex-direction:column}
.props .ptabs{height:18px}
.props .ptabs b{width:63px}
.props .ptabs .sel{height:18px;line-height:16px;letter-spacing:-.2px}
.props .pa{margin:4px 0 0 auto}.props .ptabs i{width:3px;height:11px;margin:3px 5px 0 6px;border:solid #666;border-width:0 1px}
.props .ptabs svg:last-child{margin-left:0;margin-right:4px}
.masks{height:34px;border-bottom:1px solid #333;display:flex;align-items:center;padding-left:11px;gap:6px;color:#fff;font-size:10px}
.pbody{display:flex;height:285px}
.pmain{width:269px;border-top:1px solid #6b6b6b}
.pscroll{flex:1;background:linear-gradient(90deg,#3b3b3b,#454545)}
.shapepath{height:55px;border-bottom:1px solid #383838;display:flex;padding:9px 8px 0 7px}
.pthumb{width:32px;height:25px;background:#777;border:1px solid #111;margin-right:5px}
.pthumb i{width:28px;height:21px;margin:1px;border-radius:50%;background:#fff}
.shapepath span{line-height:25px}.addmask{margin:5px 4px 0 auto}.shapepath .pressed{margin-top:2px}
.prow{display:flex;justify-content:space-between;align-items:center;padding:0 13px 0 13px;height:20px}
.dens{margin-top:16px}
.feath{margin-top:27px}
.inp{width:54px;height:19px;background:#3a3a3a;border:1px solid #333;line-height:17px;padding-left:4px;letter-spacing:0}
.slider{width:243px;height:5px;margin:3px 0 9px 13px;background:#444;border:1px solid #333;border-bottom-color:#666;border-radius:2px}
.slider i{width:10px;height:8px;margin:-2px 0 0 -5px;background:#bbb;clip-path:polygon(50% 0,100% 50%,100% 100%,0 100%,0 50%)}
.slider.end i{margin-left:237px}
.refine{display:flex;justify-content:space-between;padding:10px 7px 0 8px;color:#a9a9a9;margin-top:14px}
.btns{display:grid;gap:10px;text-align:center;margin-top:1px}
.btns div{width:108px;height:18px;line-height:16px;border:1px solid #424242;border-radius:2px;background:#5e5e5e}
.pfoot{height:19px;border-top:1px solid #333;display:flex;align-items:center;padding-left:153px;position:relative}
.pfoot svg:nth-of-type(2){margin:0 10px 0 15px}
.eyebtn{width:28px;height:18px;background:#3a3a3a;padding:3px 7px;margin-right:9px}
.pgrip{height:7px;border-top:1px solid #333;padding:1px 132px}
.taskbar{height:41px;display:flex;background:#09304a;color:#fff;flex:none;font-family:"Open Sans",sans-serif;font-stretch:normal;padding-top:0}
.task{width:48px;margin-right:1px;height:40px;display:flex;align-items:center;justify-content:center;position:relative;border-bottom:2px solid transparent}
.task:first-child{margin:0}
.task.tv{margin-right:3px}
.run{border-color:#9cd0f2}
.tele{background:#8a6847;border-color:#f77b13}
.tele em{position:absolute;left:24px;top:17px;font-size:12px;line-height:20px}
.psapp{background:#165b88}
.psico{width:21px;height:21px;border:2px solid #29abe2;background:#071a2b;color:#31c5f0;font:bold 11px/16px "Open Sans",sans-serif;text-align:center}
.tray{margin-left:auto;display:flex;align-items:center;gap:8px;width:274px;height:40px;padding-left:1px}
.bat{margin-left:2px}.cloud,.plane{margin-left:-1px}.vol{margin-left:-3px}
.lang,.clock{display:grid;text-align:center;font-size:12px;line-height:18px;letter-spacing:-.4px}
.lang{margin-left:8px;font-family:"Open Sans","DejaVu Sans",sans-serif}.clock{margin-left:6px;width:66px}
.notes{position:relative;margin-left:6px}
.notes em{position:absolute;left:8px;top:6px;width:16px;height:16px;border-radius:50%;background:#1d6096;border:1px solid #77a;text-align:center;line-height:14px;font-size:11px}
.peek{width:1px;height:40px;background:#446;margin-left:auto;margin-right:4px}
```
